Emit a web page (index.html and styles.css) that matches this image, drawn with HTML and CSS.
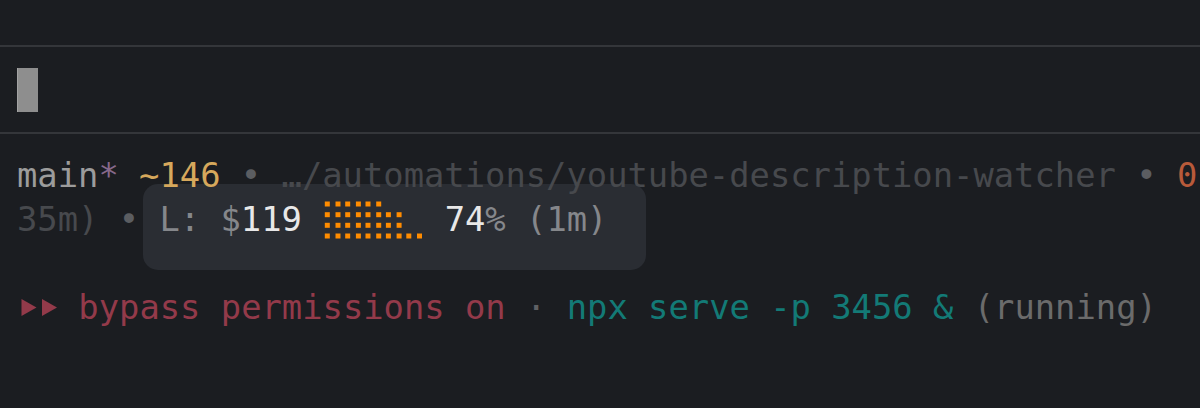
FILE: index.html
```html
<!DOCTYPE html>
<html lang="en">
<head>
<meta charset="utf-8">
<title>Terminal</title>
<link rel="stylesheet" href="styles.css">
</head>
<body>
<div class="term">
  <div class="input"><span class="cursor"></span></div>
  <div class="status">
    <div class="popover"></div>
    <div class="line"><span class="branch">main</span><span class="dirty">*</span> <span class="changes">~146</span> <span class="sep">•</span> <span class="dim">…/automations/youtube-description-watcher</span> <span class="sep">•</span> <span class="warn">0</span></div>
    <div class="line"><span class="dim">35m)</span> <span class="sep">•</span> <span class="label">L: $</span><span class="bright">119</span> <svg class="spark" width="102" height="44" viewBox="0 0 102 44" aria-hidden="true"><g fill="#ff8c00"><rect x="2.8" y="3.5" width="5" height="5"/><rect x="13.5" y="3.5" width="5" height="5"/><rect x="23.2" y="3.5" width="5" height="5"/><rect x="33.9" y="3.5" width="5" height="5"/><rect x="43.5" y="3.5" width="5" height="5"/><rect x="54.2" y="3.5" width="5" height="5"/><rect x="2.8" y="14.2" width="5" height="5"/><rect x="13.5" y="14.2" width="5" height="5"/><rect x="23.2" y="14.2" width="5" height="5"/><rect x="33.9" y="14.2" width="5" height="5"/><rect x="43.5" y="14.2" width="5" height="5"/><rect x="54.2" y="14.2" width="5" height="5"/><rect x="63.9" y="14.2" width="5" height="5"/><rect x="74.6" y="14.2" width="5" height="5"/><rect x="2.8" y="24.8" width="5" height="5"/><rect x="13.5" y="24.8" width="5" height="5"/><rect x="23.2" y="24.8" width="5" height="5"/><rect x="33.9" y="24.8" width="5" height="5"/><rect x="43.5" y="24.8" width="5" height="5"/><rect x="54.2" y="24.8" width="5" height="5"/><rect x="63.9" y="24.8" width="5" height="5"/><rect x="74.6" y="24.8" width="5" height="5"/><rect x="2.8" y="35.5" width="5" height="5"/><rect x="13.5" y="35.5" width="5" height="5"/><rect x="23.2" y="35.5" width="5" height="5"/><rect x="33.9" y="35.5" width="5" height="5"/><rect x="43.5" y="35.5" width="5" height="5"/><rect x="54.2" y="35.5" width="5" height="5"/><rect x="63.9" y="35.5" width="5" height="5"/><rect x="74.6" y="35.5" width="5" height="5"/><rect x="84.3" y="35.5" width="5" height="5"/><rect x="95" y="35.5" width="5" height="5"/></g></svg> <span class="bright">74</span><span class="label">%</span> <span class="label">(1m)</span></div>
    <div class="line"></div>
    <div class="line"><svg class="ff" width="41" height="44" viewBox="0 0 41 44" aria-hidden="true"><g fill="#933a4a"><polygon points="4.5,13 19.5,21.5 4.5,30"/><polygon points="25,13 40,21.5 25,30"/></g></svg> <span class="bypass">bypass permissions on</span> <span class="mid">·</span> <span class="cmd">npx serve -p 3456 &amp;</span> <span class="running">(running)</span></div>
  </div>
</div>
</body>
</html>
```

FILE: styles.css
```css
html, body {
  margin: 0;
  padding: 0;
  background: #1b1d21;
  width: 1200px;
  height: 408px;
  overflow: hidden;
}

.term {
  padding-top: 45px;
  font-family: "DejaVu Sans Mono", monospace;
  font-size: 33.8px;
}

.input {
  border-top: 2px solid #34363a;
  border-bottom: 2px solid #34363a;
  padding: 21px 0 20px 17px;
  height: 44px;
}

.cursor {
  display: block;
  width: 21px;
  height: 44px;
  background: #8e8e8e;
  border-left: 1px solid #a3a3a3;
  box-sizing: border-box;
}

.status {
  position: relative;
  padding: 20px 0 0 17px;
}

.popover {
  position: absolute;
  left: 143px;
  top: 50px;
  width: 503px;
  height: 86px;
  border-radius: 15px;
  background: #2a2d33;
}

.line {
  position: relative;
  z-index: 1;
  height: 44px;
  line-height: 44px;
  white-space: pre;
  overflow: visible;
}

.line svg {
  vertical-align: top;
}

.branch { color: #9c9c9c; }
.dirty { color: #87698b; }
.changes { color: #d6a85c; }
.sep { color: #5b5d61; }
.dim { color: #47494d; }
.warn { color: #b85a3a; }
.label { color: #85878b; }
.bright { color: #e8e8e8; }
.bypass { color: #933a4a; }
.mid { color: #5f6165; }
.cmd { color: #137a76; }
.running { color: #6b6b6b; }
```
